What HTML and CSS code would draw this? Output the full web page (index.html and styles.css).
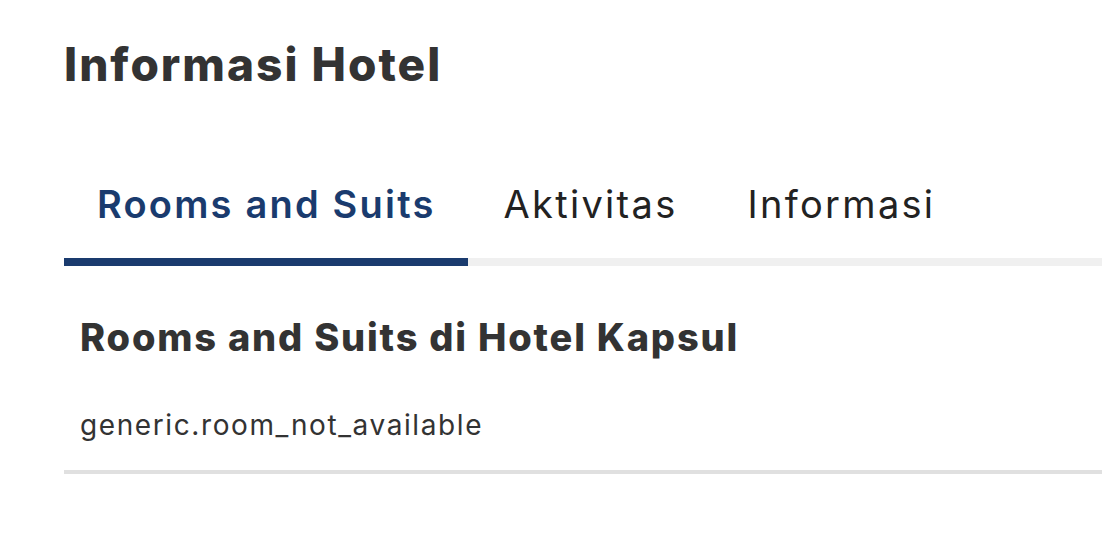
FILE: index.html
```html
<!DOCTYPE html>
<html lang="id">
<head>
<meta charset="utf-8">
<title>Informasi Hotel</title>
<link rel="stylesheet" href="styles.css">
</head>
<body>
<main class="page">
  <h1 class="title">Informasi Hotel</h1>
  <nav class="tabs">
    <div class="tab active">Rooms and Suits</div>
    <div class="tab">Aktivitas</div>
    <div class="tab">Informasi</div>
  </nav>
  <section class="panel">
    <h2 class="panel-title">Rooms and Suits di Hotel Kapsul</h2>
    <p class="panel-text">generic.room_not_available</p>
  </section>
</main>
</body>
</html>
```
FILE: styles.css
```css
html, body {
  margin: 0;
  padding: 0;
  background: #fff;
}
body {
  font-family: "Inter", "Noto Sans", sans-serif;
  color: #333;
}
.page {
  padding: 34px 0 0 64px;
}
.title {
  margin: 0;
  font-size: 46px;
  line-height: 60px;
  font-weight: 800;
  color: #333;
  letter-spacing: 2px;
}
.tabs {
  display: flex;
  margin-top: 64px;
  border-bottom: 8px solid #f0f0f0;
}
.tab {
  padding: 0 34px 8px 36px;
  font-size: 38px;
  line-height: 92px;
  color: #222;
  font-weight: 400;
  letter-spacing: 2.3px;
  margin-bottom: -8px;
  border-bottom: 8px solid transparent;
}
.tab.active {
  padding: 0 32px 8px 33px;
  color: #1a3b6e;
  font-weight: 600;
  letter-spacing: 2.2px;
  border-bottom-color: #1a3b6e;
}
.panel {
  padding: 0 0 0 16px;
  border-bottom: 4px solid #e0e0e0;
}
.panel-title {
  margin: 0;
  padding-top: 46px;
  font-size: 38px;
  line-height: 50px;
  font-weight: 800;
  color: #333;
  letter-spacing: 1.8px;
}
.panel-text {
  margin: 0;
  padding: 45px 0 27px;
  font-size: 28px;
  line-height: 36px;
  color: #333;
  letter-spacing: 1.6px;
}
```
